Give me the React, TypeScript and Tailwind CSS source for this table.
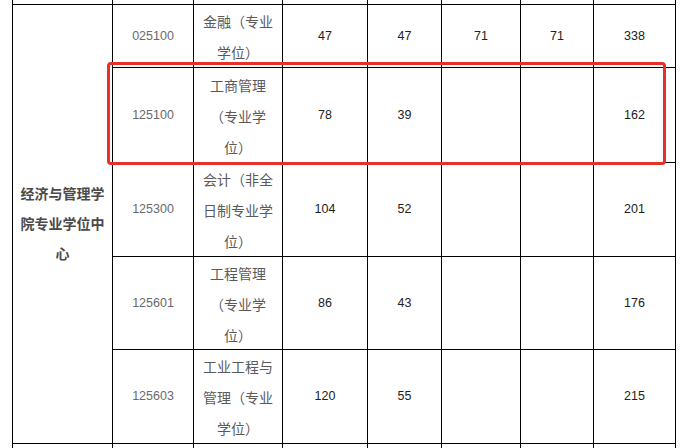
const COLS = "grid-cols-[100px_81px_89px_85px_74px_79px_73px_82px]";

type Row = {
  code: string;
  name: string[];
  cells: string[];
  h: string;
};

const rows: Row[] = [
  { code: "025100", name: ["金融（专业", "学位）"], cells: ["47", "47", "71", "71", "338"], h: "h-[63px]" },
  { code: "125100", name: ["工商管理", "（专业学", "位）"], cells: ["78", "39", "", "", "162"], h: "h-[95px]" },
  { code: "125300", name: ["会计（非全", "日制专业学", "位）"], cells: ["104", "52", "", "", "201"], h: "h-[94px]" },
  { code: "125601", name: ["工程管理", "（专业学", "位）"], cells: ["86", "43", "", "", "176"], h: "h-[93px]" },
  { code: "125603", name: ["工业工程与", "管理（专业", "学位）"], cells: ["120", "55", "", "", "215"], h: "h-[94px]" },
];

const cjk = "font-['Noto_Sans_CJK_SC',sans-serif]";
const num = "font-['Liberation_Sans',Arial,sans-serif] text-[12.5px]";
const cell = "border-r border-b border-black flex items-center justify-center";

function EdgeRow({ h }: { h: string }) {
  return (
    <>
      {Array.from({ length: 8 }).map((_, i) => (
        <div key={i} className={`${h} border-r border-b border-black`} />
      ))}
    </>
  );
}

export default function App() {
  return (
    <div className="relative h-[448px] w-[688px] overflow-hidden bg-white">
      <div className={`ml-[12px] grid w-[664px] ${COLS} border-l border-black`}>
        <EdgeRow h="h-[5px]" />

        {/* merged school cell */}
        <div className={`${cell} row-span-5 col-start-1 row-start-2 flex-col pb-[2px] text-center text-[14px] font-bold leading-[30px] text-[#4a4a4a] ${cjk}`}>
          <div>经济与管理学</div>
          <div>院专业学位中</div>
          <div>心</div>
        </div>

        {rows.map((r) => (
          <div key={r.code} className="contents">
            <div className={`${cell} ${r.h} ${num} text-[#6a6a6a]`}>{r.code}</div>
            <div className={`${cell} ${r.h} flex-col pt-[2px] text-center text-[14px] leading-[31px] text-[#5a5a5a] ${cjk}`}>
              {r.name.map((l) => (
                <div key={l}>{l}</div>
              ))}
            </div>
            {r.cells.map((v, i) => (
              <div key={i} className={`${cell} ${r.h} ${num} text-[#222]`}>
                {v}
              </div>
            ))}
          </div>
        ))}

        <div className="col-start-1 contents">
          <EdgeRow h="h-[20px]" />
        </div>
      </div>

      {/* highlight box */}
      <div className="pointer-events-none absolute left-[107px] top-[62px] h-[103px] w-[559px] rounded-[4px] border-[3px] border-[#e8302a]" />
    </div>
  );
}
